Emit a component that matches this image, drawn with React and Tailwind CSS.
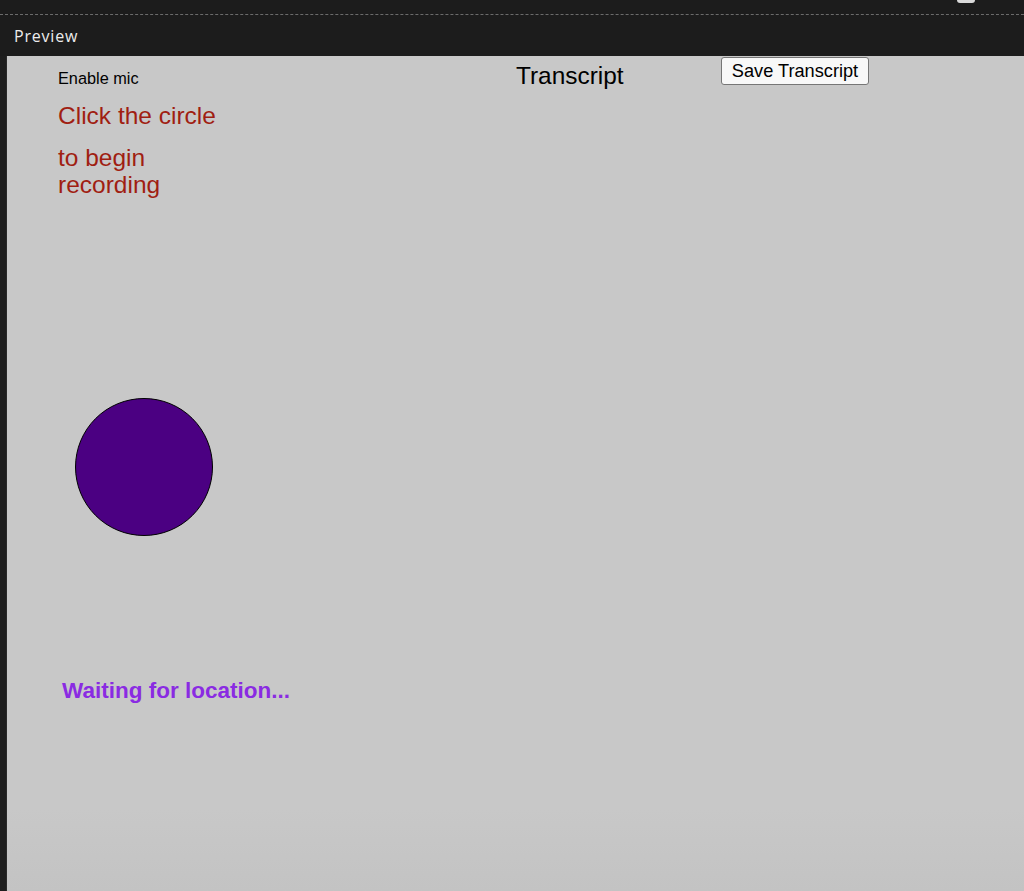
export default function App() {
  return (
    <div className="flex h-[891px] w-[1024px] flex-col overflow-hidden bg-[#1c1c1c]">
      <div className="flex h-[15px] shrink-0 justify-end border-b border-dashed border-[#6b6b6b] pr-[49px]">
        <div className="h-[3px] w-[18px] rounded-b-[9px] bg-[#d9d9d9]" />
      </div>
      <div
        className="flex h-[41px] shrink-0 items-center pl-[14px] text-[16px] tracking-[0.05em] text-[#ececec]"
        style={{ fontFamily: '"Open Sans", "Lato", sans-serif' }}
      >
        Preview
      </div>
      <div className="flex min-h-0 flex-1">
        <div className="w-[7px] shrink-0 border-r border-[#2a2a2a] bg-[#1e1e1e]" />
        <main
          className="flex flex-1 bg-gradient-to-b from-[#c8c8c8] from-90% to-[#c3c3c3]"
          style={{ fontFamily: '"Liberation Sans", Arial, sans-serif' }}
        >
          <section className="ml-[51px] flex w-[162px] shrink-0 flex-col pt-[13px]">
            <p className="text-[16.3px] leading-[18px] text-black">Enable mic</p>
            <p className="mt-[15px] whitespace-nowrap text-[24.5px] leading-[27px] text-[#a01e12]">
              Click the circle
            </p>
            <p className="mt-[15px] text-[24.5px] leading-[27px] text-[#a01e12]">
              to begin recording
            </p>
            <button
              type="button"
              aria-label="Start recording"
              className="ml-[17px] mt-[200px] h-[138px] w-[138px] shrink-0 rounded-full border border-black bg-[#4b0082]"
            />
            <p className="ml-1 mt-[142px] whitespace-nowrap text-[22.5px] font-bold leading-[25px] text-[#8a2be2]">
              Waiting for location...
            </p>
          </section>
          <section className="ml-[296px] flex items-start">
            <h2 className="mt-[6px] w-[205px] text-[24.4px] leading-[27px] text-black">Transcript</h2>
            <button
              type="button"
              className="mt-px h-[28px] w-[148px] rounded-[3px] border border-[#767676] bg-[#f8f8f8] text-[18.2px] leading-[20px] text-black"
            >
              Save Transcript
            </button>
          </section>
        </main>
      </div>
    </div>
  )
}
